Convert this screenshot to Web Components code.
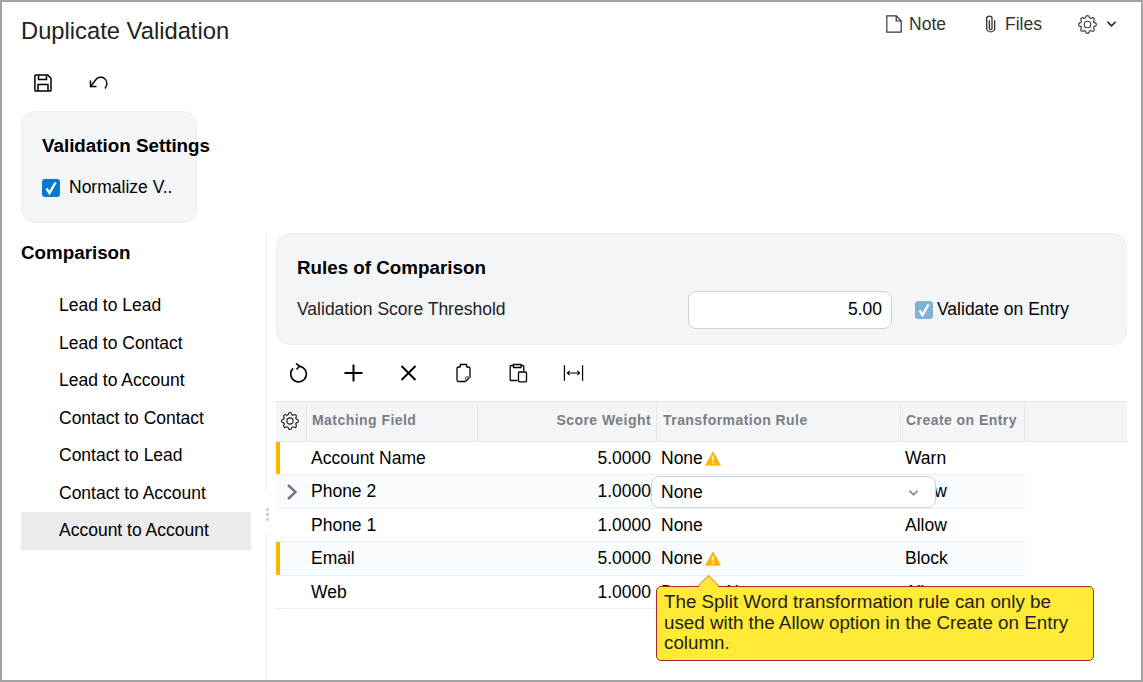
<!DOCTYPE html>
<html>
<head>
<meta charset="utf-8">
<title>Duplicate Validation</title>
<style>
  html, body { margin: 0; height: 100%; }
  body { font-family: "Liberation Sans", Arial, sans-serif; color: #000; background: #fff; }
</style>
</head>
<body>
<dv-page>
  <dv-header slot="header" title="Duplicate Validation"></dv-header>
  <dv-settings slot="settings" heading="Validation Settings" label="Normalize V.."></dv-settings>
  <dv-sidenav slot="nav" heading="Comparison">
    <dv-navitem>Lead to Lead</dv-navitem>
    <dv-navitem>Lead to Contact</dv-navitem>
    <dv-navitem>Lead to Account</dv-navitem>
    <dv-navitem>Contact to Contact</dv-navitem>
    <dv-navitem>Contact to Lead</dv-navitem>
    <dv-navitem>Contact to Account</dv-navitem>
    <dv-navitem selected>Account to Account</dv-navitem>
  </dv-sidenav>
  <dv-rules slot="main"></dv-rules>
  <dv-grid slot="main"></dv-grid>
</dv-page>

<script>
const icons = {
  gear: '<svg viewBox="0 0 16 16" fill="currentColor"><path d="M8 4.754a3.246 3.246 0 1 0 0 6.492 3.246 3.246 0 0 0 0-6.492zM5.754 8a2.246 2.246 0 1 1 4.492 0 2.246 2.246 0 0 1-4.492 0z"/><path d="M9.796 1.343c-.527-1.79-3.065-1.79-3.592 0l-.094.319a.873.873 0 0 1-1.255.52l-.292-.16c-1.64-.892-3.433.902-2.54 2.541l.159.292a.873.873 0 0 1-.52 1.255l-.319.094c-1.79.527-1.79 3.065 0 3.592l.319.094a.873.873 0 0 1 .52 1.255l-.16.292c-.892 1.64.901 3.434 2.541 2.54l.292-.159a.873.873 0 0 1 1.255.52l.094.319c.527 1.79 3.065 1.79 3.592 0l.094-.319a.873.873 0 0 1 1.255-.52l.292.16c1.64.893 3.434-.902 2.54-2.541l-.159-.292a.873.873 0 0 1 .52-1.255l.319-.094c1.79-.527 1.79-3.065 0-3.592l-.319-.094a.873.873 0 0 1-.52-1.255l.16-.292c.893-1.64-.902-3.433-2.541-2.54l-.292.159a.873.873 0 0 1-1.255-.52l-.094-.319zm-2.633.283c.246-.835 1.428-.835 1.674 0l.094.319a1.873 1.873 0 0 0 2.693 1.115l.291-.16c.764-.415 1.6.42 1.184 1.185l-.159.292a1.873 1.873 0 0 0 1.116 2.692l.318.094c.835.246.835 1.428 0 1.674l-.319.094a1.873 1.873 0 0 0-1.115 2.693l.16.291c.415.764-.42 1.6-1.185 1.184l-.291-.159a1.873 1.873 0 0 0-2.693 1.116l-.094.318c-.246.835-1.428.835-1.674 0l-.094-.319a1.873 1.873 0 0 0-2.692-1.115l-.292.16c-.764.415-1.6-.42-1.184-1.185l.159-.291A1.873 1.873 0 0 0 1.945 8.93l-.319-.094c-.835-.246-.835-1.428 0-1.674l.319-.094A1.873 1.873 0 0 0 3.06 4.377l-.16-.292c-.415-.764.42-1.6 1.185-1.184l.292.159a1.873 1.873 0 0 0 2.692-1.115l.094-.319z"/></svg>',
  clip: '<svg viewBox="3 0 9 16" preserveAspectRatio="none" fill="currentColor"><path d="M4.500 3a2.500 2.500 0 0 1 5 0v9a1.500 1.500 0 0 1-3 0V5a.5.5 0 0 1 1 0v7a.5.5 0 0 0 1 0V3a1.500 1.500 0 1 0-3 0v9a2.500 2.500 0 0 0 5 0V5a.5.5 0 0 1 1 0v7a3.500 3.500 0 1 1-7 0V3z"/></svg>',
  note: '<svg viewBox="0 0 16 18" fill="none" stroke="currentColor" stroke-width="1.200"><path d="M.8.8h9.400l5 5.200v11.200H.8z"/><path d="M10.200.8V6h5"/></svg>',
  chevron: '<svg viewBox="0 0 12 8" fill="none" stroke="currentColor" stroke-width="1.700"><path d="M1.500 1.500 6 6l4.500-4.500"/></svg>',
  save: '<svg viewBox="0 0 20 20" fill="none" stroke="currentColor" stroke-width="1.500"><path d="M2.700 2h12l3.300 3.300v11.900a.8.8 0 0 1-.8.8H2.700a.8.8 0 0 1-.8-.8V2.800a.8.8 0 0 1 .8-.8z"/><path d="M5.500 2v4.600h8V2M5 18v-6.600h10V18"/></svg>',
  undo: '<svg viewBox="0 0 20 18" fill="none" stroke="currentColor" stroke-width="1.500"><path d="M2.500 6.500v6h6"/><path d="M2.500 12.500 8 5.500C10 3 14 2.500 16.500 4.500c3 2.500 3 6.500.5 10"/></svg>',
  refresh: '<svg viewBox="0 0 20 20" fill="none" stroke="currentColor" stroke-width="1.600"><path d="M4.600 5.400A7.800 7.800 0 1 0 10 3.200"/><path d="M7.500.5 11 3.200 8 6.500"/></svg>',
  plus: '<svg viewBox="0 0 20 20" fill="none" stroke="currentColor" stroke-width="2"><path d="M10 1.500v17M1 10h18"/></svg>',
  close: '<svg viewBox="0 0 20 20" fill="none" stroke="currentColor" stroke-width="1.900"><path d="M3 3l14 14M17 3 3 17"/></svg>',
  copy: '<svg viewBox="0 0 18 20" fill="none" stroke="currentColor" stroke-width="1.300"><path d="M5.500 4H4Q2.500 4 2.500 5.500V17q0 1.500 1.500 1.500h7l4.500-4.500V5.500Q15.500 4 14 4h-1.500L12 1.500H6z"/><path d="M11 18.500V15q0-1 1-1h3.500" stroke="#777"/></svg>',
  paste: '<svg viewBox="0 0 20 20" fill="none" stroke="currentColor" stroke-width="1.300"><path d="M9 17.500H3q-1.300 0-1.300-1.300V3.800q0-1.300 1.300-1.300h2M12.500 2.500H14q1.300 0 1.300 1.300V8"/><path d="M5 4.500V1.500h7.500v3z"/><rect x="10" y="9" width="8" height="9.800" rx="1"/></svg>',
  fit: '<svg viewBox="0 0 22 18" fill="none" stroke="currentColor" stroke-width="1.100"><path d="M1.500 1v16M20.500 1v16" stroke-width="1.300"/><path d="M4.500 9h13M7 6.700 4.500 9 7 11.300M15 6.700 17.500 9 15 11.300"/></svg>',
  warn: '<svg viewBox="0 0 16 15" fill="#ffb400" stroke="#ffb400" stroke-width=".7" stroke-linejoin="round"><path fill-rule="evenodd" d="M8 .8 15.500 14.200H.5zM6.900 4.800v5.200h2.200V4.800zM6.900 10.800v2.400h2.200v-2.400z"/></svg>',
  right: '<svg viewBox="0 0 12 18" fill="none" stroke="#757580" stroke-width="2.400"><path d="M2 2l7.500 7L2 16"/></svg>'
};

class DvPage extends HTMLElement {
  constructor() {
    super();
    this.attachShadow({ mode: 'open' });
    this.shadowRoot.innerHTML = `
      <style>
        :host { display: flex; flex-direction: column; box-sizing: border-box; width: 1143px; height: 682px; border: 2px solid #a3a3a3; overflow: hidden; }
        .body { flex: 1; display: grid; grid-template-columns: 265px 1fr; min-height: 0; padding-top: 10px; }
        .side { position: relative; border-right: 1px solid #eef0f3; padding-left: 19px; }
        /* gap in the divider, with the drag handle in it */
        .side::before { content: ""; position: absolute; right: -1px; top: 260px; width: 1px; height: 40px; background: #fff; }
        .side::after { content: ""; position: absolute; right: -3px; top: 275px; width: 3px; height: 15px; background: radial-gradient(circle at 1.5px 1.5px, #c4c4c4 1.3px, transparent 1.5px) 0 0 / 3px 5px; }
        .main { padding: 0 14px 0 9px; display: flex; flex-direction: column; position: relative; }
      </style>
      <slot name="header"></slot>
      <slot name="settings"></slot>
      <div class="body">
        <div class="side"><slot name="nav"></slot></div>
        <div class="main"><slot name="main"></slot></div>
      </div>`;
  }
}

class DvHeader extends HTMLElement {
  constructor() {
    super();
    this.attachShadow({ mode: 'open' });
    this.shadowRoot.innerHTML = `
      <style>
        :host { display: block; padding: 0 0 0 19px; height: 109px; box-sizing: border-box; }
        .top { display: flex; justify-content: space-between; height: 58px; }
        h1 { margin: 14px 0 0; font-size: 23.750px; line-height: 29px; font-weight: 400; color: #222; }
        .links { display: flex; align-items: center; height: 44px; color: #333; font-size: 17.500px; padding-right: 24px; }
        .link { display: flex; align-items: center; }
        .link svg { display: block; }
        .note { margin-right: 38px; gap: 7px; }
        .note svg { width: 16px; height: 18px; }
        .files { margin-right: 36px; gap: 9px; }
        .files svg { width: 12px; height: 18px; }
        .more { gap: 9px; color: #444; }
        .more svg:first-child { width: 19px; height: 19px; }
        .more svg:last-child { width: 11px; height: 8px; color: #222; }
        .tools { display: flex; padding-left: 12px; height: 46px; align-items: center; color: #000; }
        .tools span { display: block; }
        .tools svg { display: block; width: 100%; height: 100%; }
        .save { width: 20px; height: 20px; margin-right: 35px; }
        .undo { width: 20px; height: 18px; }
      </style>
      <div class="top">
        <h1>${this.getAttribute('title')}</h1>
        <div class="links">
          <span class="link note">${icons.note}Note</span>
          <span class="link files">${icons.clip}Files</span>
          <span class="link more">${icons.gear}${icons.chevron}</span>
        </div>
      </div>
      <div class="tools"><span class="save">${icons.save}</span><span class="undo">${icons.undo}</span></div>`;
  }
}

class DvCheck extends HTMLElement {
  constructor() {
    super();
    this.attachShadow({ mode: 'open' });
    this.shadowRoot.innerHTML = `
      <style>
        :host { display: inline-flex; align-items: center; gap: 9px; font-size: 17.500px; }
        :host([muted]) { gap: 4px; }
        :host([muted]) span { padding-bottom: 1px; }
        i { display: block; width: 18px; height: 18px; border-radius: 3px; background: #0b78cf; }
        :host([muted]) i { background: #7fb2d8; }
        svg { display: block; }
      </style>
      <i><svg width="18" height="18" viewBox="0 0 18 18" fill="none" stroke="#fff" stroke-width="2.400"><path d="M4.500 9.500 7.500 14 13.500 3.500"/></svg></i>
      <span><slot></slot></span>`;
  }
}

class DvSettings extends HTMLElement {
  constructor() {
    super();
    this.attachShadow({ mode: 'open' });
    this.shadowRoot.innerHTML = `
      <style>
        :host { display: block; box-sizing: border-box; width: 176px; height: 112px; margin-left: 19px; padding: 22px 0 0 20px; border: 1px solid #edeef1; border-radius: 14px; background: #f4f5f7; }
        h2 { margin: 0 0 19px; font-size: 18.800px; line-height: 24px; font-weight: 700; white-space: nowrap; }
      </style>
      <h2>${this.getAttribute('heading')}</h2>
      <dv-check>${this.getAttribute('label')}</dv-check>`;
  }
}

class DvSidenav extends HTMLElement {
  constructor() {
    super();
    this.attachShadow({ mode: 'open' });
    this.shadowRoot.innerHTML = `
      <style>
        :host { display: block; width: 230px; padding-top: 8px; }
        h2 { margin: 0 0 22px; font-size: 18.800px; line-height: 24px; font-weight: 700; }
        .list { display: flex; flex-direction: column; }
      </style>
      <h2>${this.getAttribute('heading')}</h2>
      <div class="list"><slot></slot></div>`;
  }
}

class DvNavitem extends HTMLElement {
  constructor() {
    super();
    this.attachShadow({ mode: 'open' });
    this.shadowRoot.innerHTML = `
      <style>
        :host { display: flex; align-items: center; height: 37.500px; padding-left: 38px; font-size: 17.500px; }
        :host([selected]) { background: #ebebeb; }
      </style>
      <slot></slot>`;
  }
}

class DvRules extends HTMLElement {
  constructor() {
    super();
    this.attachShadow({ mode: 'open' });
    this.shadowRoot.innerHTML = `
      <style>
        :host { display: block; box-sizing: border-box; height: 112px; padding: 22px 0 0 20px; border: 1px solid #edeef1; border-radius: 14px; background: #f4f5f7; font-size: 17.500px; }
        h2 { margin: 0 0 11px; font-size: 18.800px; line-height: 24px; font-weight: 700; }
        .row { display: flex; align-items: center; height: 38px; }
        .label { width: 391px; color: #222; padding-bottom: 1px; }
        .input { box-sizing: border-box; width: 204px; height: 38px; line-height: 35px; border: 1px solid #cfd1d6; border-radius: 8px; background: #fff; text-align: right; padding-right: 9px; margin-right: 23px; }
      </style>
      <h2>Rules of Comparison</h2>
      <div class="row">
        <span class="label">Validation Score Threshold</span>
        <span class="input">5.00</span>
        <dv-check muted>Validate on Entry</dv-check>
      </div>`;
  }
}

class DvRow extends HTMLElement {
  constructor() {
    super();
    this.attachShadow({ mode: 'open' });
    this.shadowRoot.innerHTML = `
      <style>
        :host { display: grid; grid-template-columns: 30px 171px 179px 245px 124px; width: 749px; box-sizing: border-box; height: 33.500px; padding-top: 1px; align-items: center; border-bottom: 1px solid #e8eff5; font-size: 17.500px; position: relative; }
        :host([alt]) { background: #f9fcfe; }
        :host([warn])::before { content: ""; position: absolute; left: 0; top: 0; bottom: 0; width: 4px; background: #ffb400; }
        .num { text-align: right; padding-right: 5px; }
        .rule { padding-left: 5px; display: flex; align-items: center; gap: 2px; }
        .rule svg { width: 16px; height: 15px; }
        .first { padding-left: 5px; }
        .last { padding-left: 4px; }
        .exp { display: flex; justify-content: center; padding-left: 2px; }
        .exp svg { width: 12px; height: 18px; }
        svg { display: block; }
      </style>
      <span class="exp">${this.hasAttribute('expand') ? icons.right : ''}</span>
      <span class="first">${this.getAttribute('field')}</span>
      <span class="num">${this.getAttribute('score')}</span>
      <span class="rule">${this.getAttribute('rule')}${this.hasAttribute('warn') ? icons.warn : ''}</span>
      <span class="last">${this.getAttribute('entry')}</span>`;
  }
}

class DvGrid extends HTMLElement {
  constructor() {
    super();
    this.attachShadow({ mode: 'open' });
    this.shadowRoot.innerHTML = `
      <style>
        :host { display: block; position: relative; }
        .bar { display: flex; align-items: center; gap: 34px; height: 56px; padding-left: 12px; color: #000; }
        .bar span { display: block; width: 21px; height: 20px; }
        .bar svg { display: block; width: 100%; height: 100%; }
        .head { display: grid; grid-template-columns: 31px 171px 179px 244px 124px 1fr; height: 40.500px; box-sizing: border-box; background: #f4f5f7; border-top: 1px solid #e6e7ea; border-bottom: 1px solid #e1e3e6; font-size: 14px; font-weight: 700; color: #7d7d85; letter-spacing: .45px; }
        .head > div { display: flex; align-items: center; padding: 0 0 3px 5px; border-right: 1px solid #e6e7ea; }
        .head > div:last-child { border-right: 0; }
        .head .gear { padding: 0 0 0 5px; color: #222; }
        .head .gear svg { width: 18px; height: 18px; }
        .head .r { justify-content: flex-end; padding-right: 5px; }
        .head .t { padding-left: 6px; }
        .editor { position: absolute; left: 375px; top: 131px; width: 285px; height: 32px; box-sizing: border-box; border: 1px solid #cfd3da; border-radius: 8px; background: #fff; font-size: 17.500px; line-height: 30px; padding-left: 9px; }
        .editor svg { position: absolute; right: 16px; top: 12px; width: 11px; height: 8px; color: #777; }
        .tip { position: absolute; left: 380px; top: 241px; width: 438px; box-sizing: border-box; padding: 5px 8px 6px 7px; background: #ffea36; border: 1px solid #a8272c; border-radius: 5px; font-size: 18.800px; line-height: 20.500px; color: #222; }
        .tip::before { content: ""; position: absolute; left: 44px; top: -9px; width: 14px; height: 14px; background: #ffea36; border-left: 1px solid #cf8a55; border-top: 1px solid #cf8a55; transform: rotate(45deg); }
        .tip span { position: relative; }
      </style>
      <div class="bar">
        <span>${icons.refresh}</span><span>${icons.plus}</span><span>${icons.close}</span><span>${icons.copy}</span><span>${icons.paste}</span><span>${icons.fit}</span>
      </div>
      <div class="head">
        <div class="gear">${icons.gear}</div>
        <div>Matching Field</div>
        <div class="r">Score Weight</div>
        <div class="t">Transformation Rule</div>
        <div>Create on Entry</div>
        <div></div>
      </div>
      <dv-row warn field="Account Name" score="5.0000" rule="None" entry="Warn"></dv-row>
      <dv-row alt expand field="Phone 2" score="1.0000" rule="None" entry="Allow"></dv-row>
      <dv-row field="Phone 1" score="1.0000" rule="None" entry="Allow"></dv-row>
      <dv-row alt warn field="Email" score="5.0000" rule="None" entry="Block"></dv-row>
      <dv-row field="Web" score="1.0000" rule="Domain Name" entry="Allow"></dv-row>
      <div class="editor">None<svg viewBox="0 0 12 8" fill="none" stroke="currentColor" stroke-width="1.500"><path d="M1.500 1.500 6 6l4.500-4.500"/></svg></div>
      <div class="tip"><span>The Split Word transformation rule can only be used with the Allow option in the Create on Entry column.</span></div>`;
  }
}

customElements.define('dv-check', DvCheck);
customElements.define('dv-row', DvRow);
customElements.define('dv-page', DvPage);
customElements.define('dv-header', DvHeader);
customElements.define('dv-settings', DvSettings);
customElements.define('dv-sidenav', DvSidenav);
customElements.define('dv-navitem', DvNavitem);
customElements.define('dv-rules', DvRules);
customElements.define('dv-grid', DvGrid);
</script>
</body>
</html>
